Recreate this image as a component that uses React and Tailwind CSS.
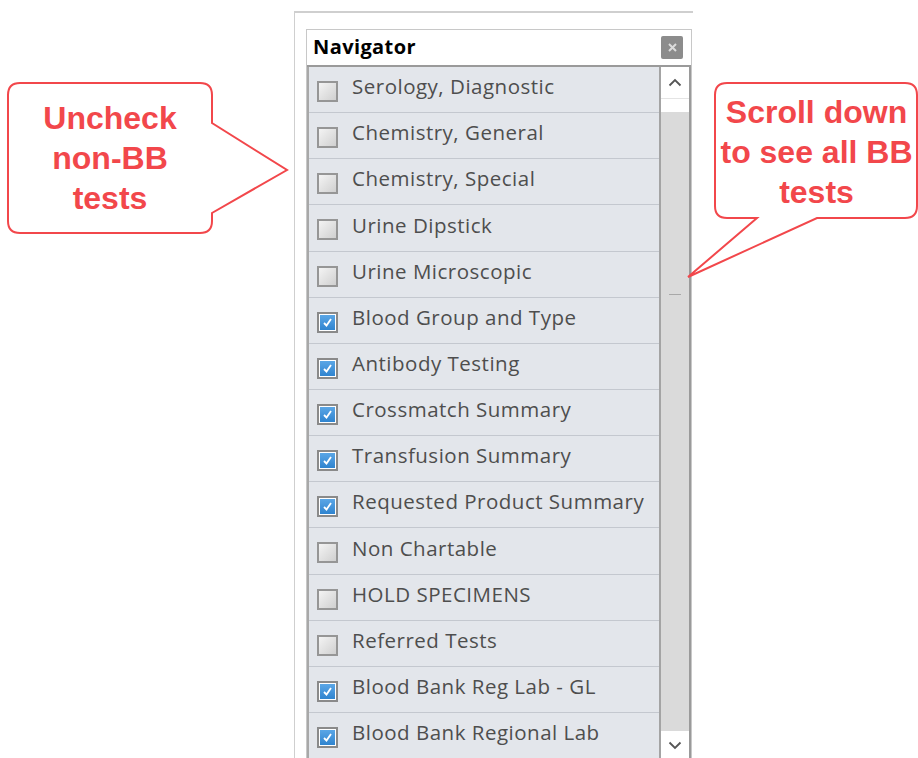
import React from "react";

const tests = [
  { name: "Serology, Diagnostic", on: false },
  { name: "Chemistry, General", on: false },
  { name: "Chemistry, Special", on: false },
  { name: "Urine Dipstick", on: false },
  { name: "Urine Microscopic", on: false },
  { name: "Blood Group and Type", on: true },
  { name: "Antibody Testing", on: true },
  { name: "Crossmatch Summary", on: true },
  { name: "Transfusion Summary", on: true },
  { name: "Requested Product Summary", on: true },
  { name: "Non Chartable", on: false },
  { name: "HOLD SPECIMENS", on: false },
  { name: "Referred Tests", on: false },
  { name: "Blood Bank Reg Lab - GL", on: true },
  { name: "Blood Bank Regional Lab", on: true },
];

function Box({ on }) {
  if (on) {
    return (
      <div className="w-[21px] h-[21px] border-2 border-[#8a8a8a] bg-white p-[1px] shrink-0">
        <div className="w-full h-full bg-gradient-to-b from-[#5aa6e6] to-[#2f84cf] flex items-center justify-center">
          <svg width="11" height="11" viewBox="0 0 11 11">
            <path d="M2 6 L4.5 8.5 L9 2" fill="none" stroke="white" strokeWidth="1.8" />
          </svg>
        </div>
      </div>
    );
  }
  return (
    <div className="w-[21px] h-[21px] border-2 border-[#969696] bg-gradient-to-br from-[#f4f4f4] to-[#d0d0d0] shrink-0" />
  );
}

function Row({ name, on }) {
  return (
    <div className="h-[46.15px] border-b border-[#c4c8cf] bg-[#e3e6eb] flex items-center pl-[8px] gap-[14px]">
      <div className="pt-[4px]">
        <Box on={on} />
      </div>
      <span className="text-[20.5px] text-[#4e4e4e] whitespace-nowrap pb-[6px] tracking-[0.5px]">
        {name}
      </span>
    </div>
  );
}

export default function App() {
  return (
    <div
      className="relative w-[918px] h-[758px] overflow-hidden bg-white"
      style={{ fontFamily: '"Open Sans", "Noto Sans", sans-serif' }}
    >
      {/* host window frame */}
      <div className="ml-[294px] mt-[11px] w-[399px] h-[747px] border-t-2 border-[#8a8a8a] border-l border-[#cfcfcf] pl-[11px] pt-[16px]">
        {/* navigator pane */}
        <div className="w-[386px] h-[760px] border border-[#c8c8c8] flex flex-col">
          <div className="h-[37px] bg-white flex items-center justify-between pl-[6px] pr-[8px] border-b-2 border-[#9a9a9a]">
            <span className="font-bold text-[20px] tracking-[0.4px] text-black pb-[2px]">Navigator</span>
            <div className="w-[22px] h-[23px] bg-[#8c8c8c] rounded-[2px] flex items-center justify-center">
              <svg width="11" height="11" viewBox="0 0 11 11">
                <path d="M2 2 L9 9 M9 2 L2 9" stroke="#dcdcdc" strokeWidth="2" />
              </svg>
            </div>
          </div>
          <div className="flex flex-1 min-h-0">
            <div className="flex-1 border-l-2 border-[#a8a8a8] border-r-2 border-r-[#a4a4a4] overflow-hidden">
              {tests.map((t) => (
                <Row key={t.name} name={t.name} on={t.on} />
              ))}
            </div>
            {/* vertical scrollbar */}
            <div className="w-[30px] flex flex-col bg-white border-r-2 border-[#9a9a9a]">
              <div className="h-[32px] flex items-center justify-center border-b border-[#e4e4e4]">
                <svg width="14" height="9" viewBox="0 0 14 9">
                  <path d="M1.5 7.5 L7 2 L12.5 7.5" fill="none" stroke="#555" strokeWidth="1.8" />
                </svg>
              </div>
              <div className="h-[13px]" />
              <div className="h-[619px] bg-[#dadada] flex flex-col items-center pt-[182px]">
                <div className="w-[12px] h-[1px] bg-[#a8a8a8]" />
              </div>
              <div className="h-[28px] flex items-center justify-center">
                <svg width="14" height="9" viewBox="0 0 14 9">
                  <path d="M1.5 1.5 L7 7 L12.5 1.5" fill="none" stroke="#555" strokeWidth="1.8" />
                </svg>
              </div>
            </div>
          </div>
        </div>
      </div>

      {/* annotation callouts */}
      <svg className="absolute left-0 top-0 pointer-events-none" width="918" height="758">
        <path
          d="M20 83 H200 Q212 83 212 95 V123 L287 170 L212 213 V221 Q212 233 200 233 H20 Q8 233 8 221 V95 Q8 83 20 83 Z"
          fill="white"
          stroke="#f2474b"
          strokeWidth="2"
        />
        <path
          d="M727 83 H905 Q917 83 917 95 V206 Q917 218 905 218 H817 L688 277 L757 218 H727 Q715 218 715 206 V95 Q715 83 727 83 Z"
          fill="white"
          stroke="#f2474b"
          strokeWidth="2"
        />
      </svg>
      <div
        className="absolute left-[8px] top-[98px] w-[204px] text-center font-bold text-[32px] leading-[40px] text-[#f2474b]"
        style={{ fontFamily: '"Liberation Sans", Arial, sans-serif' }}
      >
        <div>Uncheck</div>
        <div>non-BB</div>
        <div>tests</div>
      </div>
      <div
        className="absolute left-[715px] top-[92px] w-[203px] text-center font-bold text-[32px] leading-[40px] text-[#f2474b] whitespace-nowrap"
        style={{ fontFamily: '"Liberation Sans", Arial, sans-serif' }}
      >
        <div>Scroll down</div>
        <div>to see all BB</div>
        <div>tests</div>
      </div>
    </div>
  );
}
